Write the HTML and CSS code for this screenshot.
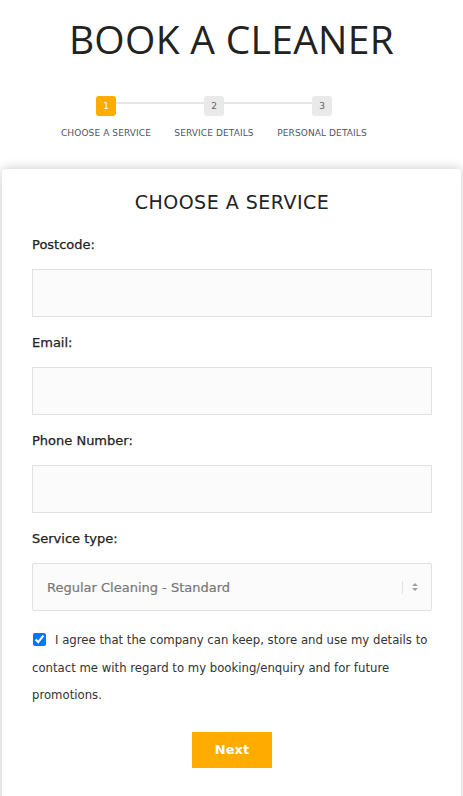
FILE: index.html
```html
<!DOCTYPE html>
<html lang="en">
<head>
<meta charset="utf-8">
<title>Book a Cleaner</title>
<link rel="stylesheet" href="styles.css">
</head>
<body>
<h1 class="page-title">BOOK A CLEANER</h1>
<div class="steps">
  <div class="step step-active">
    <div class="step-num">1</div>
    <div class="step-label">CHOOSE A SERVICE</div>
  </div>
  <div class="step">
    <div class="step-num">2</div>
    <div class="step-label">SERVICE DETAILS</div>
  </div>
  <div class="step step-last">
    <div class="step-num">3</div>
    <div class="step-label">PERSONAL DETAILS</div>
  </div>
</div>
<form class="card">
  <h2 class="card-title">CHOOSE A SERVICE</h2>
  <div class="field">
    <label class="field-label">Postcode:</label>
    <input class="field-input" type="text">
  </div>
  <div class="field">
    <label class="field-label">Email:</label>
    <input class="field-input" type="text">
  </div>
  <div class="field">
    <label class="field-label">Phone Number:</label>
    <input class="field-input" type="text">
  </div>
  <div class="field">
    <label class="field-label">Service type:</label>
    <div class="select">
      <span class="select-value">Regular Cleaning - Standard</span>
      <span class="select-sep"></span>
      <svg class="select-arrows" width="8" height="10" viewBox="0 0 8 10"><path d="M4 1 L7 4 L1 4 Z M4 9 L7 6 L1 6 Z" fill="#a0a0a0"/></svg>
    </div>
  </div>
  <p class="consent"><input class="consent-box" type="checkbox" checked>I agree that the company can keep, store and use my details to contact me with regard to my booking/enquiry and for future promotions.</p>
  <div class="actions">
    <button class="btn-next" type="button">Next</button>
  </div>
</form>
</body>
</html>
```
FILE: styles.css
```css
html, body {
  margin: 0;
  padding: 0;
  background: #ffffff;
}
body {
  font-family: "DejaVu Sans", "Noto Sans", sans-serif;
  color: #222;
  overflow: hidden;
}
.page-title {
  margin: 10px 0 0;
  font-family: "Open Sans", sans-serif;
  font-weight: 400;
  font-size: 39px;
  line-height: 57px;
  letter-spacing: 0.3px;
  text-align: center;
  color: #222;
}
.steps {
  display: flex;
  justify-content: center;
  padding-right: 35px;
  margin-top: 29px;
}
.step {
  position: relative;
  width: 108px;
  display: flex;
  flex-direction: column;
  align-items: center;
}
.step::after {
  content: "";
  position: absolute;
  top: 6px;
  left: calc(50% + 10px);
  width: 88px;
  height: 2px;
  background: #e6e6e6;
}
.step-last::after {
  display: none;
}
.step-num {
  width: 20px;
  height: 20px;
  border-radius: 3px;
  background: #e9e9e9;
  color: #666;
  font-size: 9px;
  line-height: 20px;
  text-align: center;
}
.step-active .step-num {
  background: #ffab00;
  color: #fff;
}
.step-label {
  margin-top: 11px;
  font-size: 9px;
  line-height: 12px;
  color: #4f5566;
  white-space: nowrap;
  letter-spacing: 0.1px;
}
.card {
  margin: 30px 2px 0;
  padding: 21px 29px 40px 30px;
  background: #fff;
  border-radius: 4px;
  box-shadow: 0 0 12px rgba(0, 0, 0, 0.22);
}
.card-title {
  margin: 0 0 21px;
  font-size: 19px;
  line-height: 24px;
  font-weight: 400;
  letter-spacing: 0.5px;
  text-align: center;
  color: #222;
}
.field {
  display: flex;
  flex-direction: column;
  margin-bottom: 16px;
}
.field-label {
  font-size: 13px;
  line-height: 20px;
  margin-bottom: 14px;
  color: #222;
  -webkit-text-stroke: 0.25px #222;
}
.field-input {
  box-sizing: border-box;
  width: 400px;
  height: 48px;
  margin: 0;
  border: 1px solid #e2e2e2;
  background: #fbfbfb;
  border-radius: 0;
  outline: none;
}
.select {
  box-sizing: border-box;
  width: 400px;
  height: 48px;
  display: flex;
  align-items: center;
  border: 1px solid #e2e2e2;
  border-radius: 2px;
  background: #fbfbfb;
  padding: 0 0 0 14px;
}
.select-value {
  flex: 1;
  font-size: 13px;
  color: #777;
  -webkit-text-stroke: 0.2px #777;
}
.select-sep {
  width: 1px;
  height: 13px;
  background: #e2e2e2;
  margin-right: 8px;
}
.select-arrows {
  margin-right: 12px;
}
.consent {
  margin: 0;
  font-size: 11.7px;
  line-height: 27.5px;
  color: #333;
}
.consent-box {
  width: 13px;
  height: 13px;
  margin: 0 9px 0 1px;
  vertical-align: -2px;
}
.actions {
  display: flex;
  justify-content: center;
  margin-top: 22px;
}
.btn-next {
  width: 80px;
  height: 36px;
  border: 0;
  border-radius: 0;
  background: #ffab00;
  color: #fff;
  font-family: "DejaVu Sans", sans-serif;
  font-weight: 700;
  font-size: 13px;
}
```
